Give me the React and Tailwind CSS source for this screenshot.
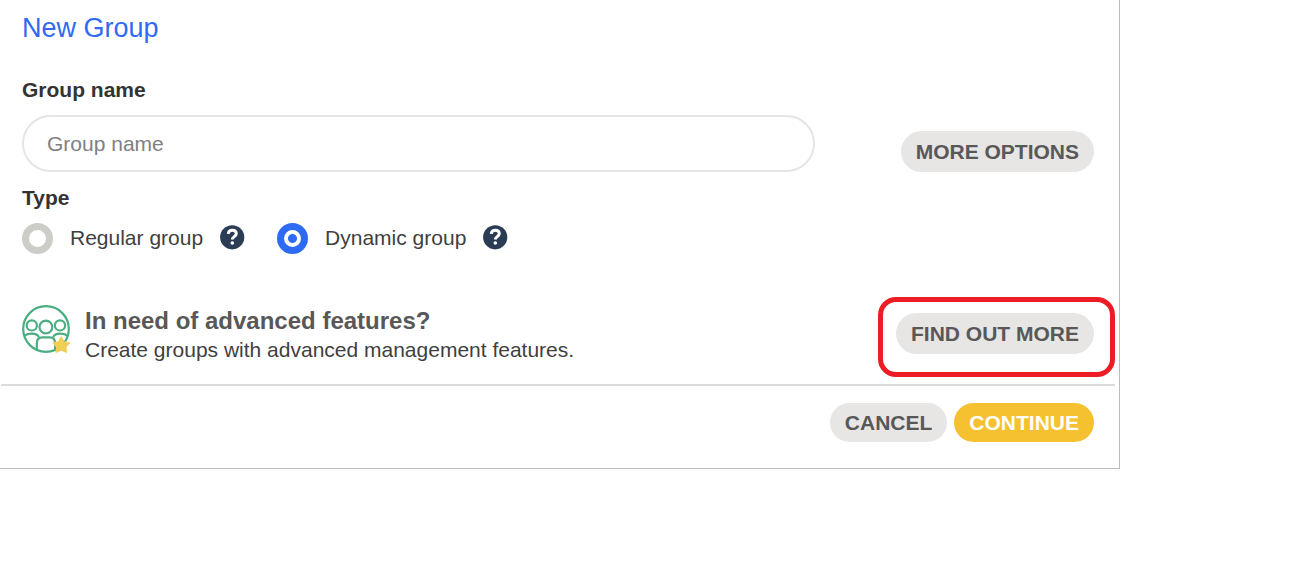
import React, { useState } from "react";

const pillClass = "rounded-full px-[15px] text-[21px] font-bold whitespace-nowrap cursor-pointer";

function GroupBadge() {
    return (
        <svg width="48" height="48" viewBox="0 0 48 48" fill="none" aria-hidden="true" className="shrink-0">
            <g stroke="#4aae83" strokeWidth="2.2">
                <circle cx="24" cy="24" r="22.8" />
                <circle cx="9.8" cy="20.4" r="5.1" />
                <circle cx="38" cy="20.4" r="5.1" />
                <circle cx="23.9" cy="22" r="6.4" />
                <path d="M14.800 45V38.500c0-4 1.800-6.200 5.500-6.200h7.400c3.700 0 5.500 2.200 5.500 6.200V44" />
                <path d="M2.500 31.200c1.500-1.900 4-2.500 7.300-2.500 3.600 0 6 1 7 3.400" />
                <path d="M45.500 31.200c-1.500-1.900-4-2.500-7.300-2.500-3.600 0-6 1-7 3.400" />
            </g>
            <path
                d="M39.300 32.300l2.500 4.700 5.400 1-3.700 4 .8 5-5-2.200-5 2.200.8-5-3.700-4 5.400-1z"
                fill="#f0cf55"
                stroke="#f0cf55"
                strokeWidth="1.6"
                strokeLinejoin="round"
            />
        </svg>
    );
}

function HelpButton({ label }) {
    return (
        <button type="button" aria-label={label} className="h-[25px] w-[25px] shrink-0 cursor-pointer -translate-y-px">
            <svg width="25" height="25" viewBox="0 0 25 25" aria-hidden="true">
                <circle cx="12.2" cy="12.3" r="12.1" fill="#2b3d54" />
                <path
                    d="M8.300 8.800C8.500 6.500 10 5.300 12.300 5.300c2.500 0 4 1.300 4 3.300 0 3.100-4 2.900-4 5.900"
                    fill="none"
                    stroke="#fff"
                    strokeWidth="3"
                />
                <circle cx="12.300" cy="18" r="1.800" fill="#fff" />
            </svg>
        </button>
    );
}

function TypeOption({ value, label, type, onChange }) {
    return (
        <div className="flex items-center gap-[17px]">
            <label className="flex items-center gap-[17px] text-[21px] leading-8 text-[#3f3f3f] cursor-pointer">
                <input
                    type="radio"
                    name="group-type"
                    value={value}
                    checked={type === value}
                    onChange={() => onChange(value)}
                    className="h-[31px] w-[31px] shrink-0 appearance-none rounded-full border-[7px] border-[#cccdc8] checked:border-[#2f6bf2] checked:bg-[radial-gradient(circle,#2f6bf2_4px,#fff_5px)]"
                />
                {label}
            </label>
            <HelpButton label={`About ${label}`} />
        </div>
    );
}

export default function App() {
    const [name, setName] = useState("");
    const [type, setType] = useState("dynamic");

    return (
        <form
            onSubmit={(e) => e.preventDefault()}
            className="w-full max-w-[1120px] border-r border-b border-[#bdbdbd] bg-white font-['Liberation_Sans',Arial,sans-serif]"
        >
            <div className="pt-2 pr-[25px] pl-[22px]">
                <h1 className="text-[27px] leading-10 text-[#2f6bf2]">New Group</h1>

                <label htmlFor="group-name" className="mt-7 block text-[21px] leading-7 font-bold text-[#333]">
                    Group name
                </label>
                <div className="mt-[11px] flex items-end gap-[86px]">
                    <input
                        id="group-name"
                        type="text"
                        value={name}
                        onChange={(e) => setName(e.target.value)}
                        placeholder="Group name"
                        className="h-[57px] min-w-0 flex-1 rounded-full border-2 border-[#e5e5e5] px-[23px] text-[21px] text-[#333] placeholder:text-[#808080]"
                    />
                    <button type="button" className={`${pillClass} h-[41px] bg-[#e7e6e4] text-[#585858]`}>
                        MORE OPTIONS
                    </button>
                </div>

                <fieldset className="mt-3">
                    <legend className="text-[21px] leading-7 font-bold text-[#333]">Type</legend>
                    <div className="mt-[10px] flex flex-wrap gap-8">
                        <TypeOption value="regular" label="Regular group" type={type} onChange={setType} />
                        <TypeOption value="dynamic" label="Dynamic group" type={type} onChange={setType} />
                    </div>
                </fieldset>

                <div className="mt-[51px] flex gap-[15px]">
                    <GroupBadge />
                    <div className="flex-1">
                        <h2 className="text-[24px] leading-8 font-bold text-[#585858]">In need of advanced features?</h2>
                        <p className="text-[21px] leading-[26px] text-[#3f3f3f]">
                            Create groups with advanced management features.
                        </p>
                    </div>
                    <div className="relative mt-2 self-start">
                        <button type="button" className={`${pillClass} h-[41px] bg-[#e7e6e4] text-[#585858]`}>
                            FIND OUT MORE
                        </button>
                        <div className="pointer-events-none absolute -top-4 -right-[21px] -bottom-[23px] -left-[18px] rounded-[18px] border-[5px] border-[#ee1c25]" />
                    </div>
                </div>
            </div>

            <div className="mt-[21px] mr-1 ml-px border-t-2 border-[#dcdcdc]" />

            <div className="flex justify-end gap-[7px] pt-[17px] pr-[25px] pb-[26px]">
                <button type="button" className={`${pillClass} h-[39px] bg-[#e7e6e4] text-[#585858]`}>
                    CANCEL
                </button>
                <button type="submit" className={`${pillClass} h-[39px] bg-[#f5c131] text-white`}>
                    CONTINUE
                </button>
            </div>
        </form>
    );
}
